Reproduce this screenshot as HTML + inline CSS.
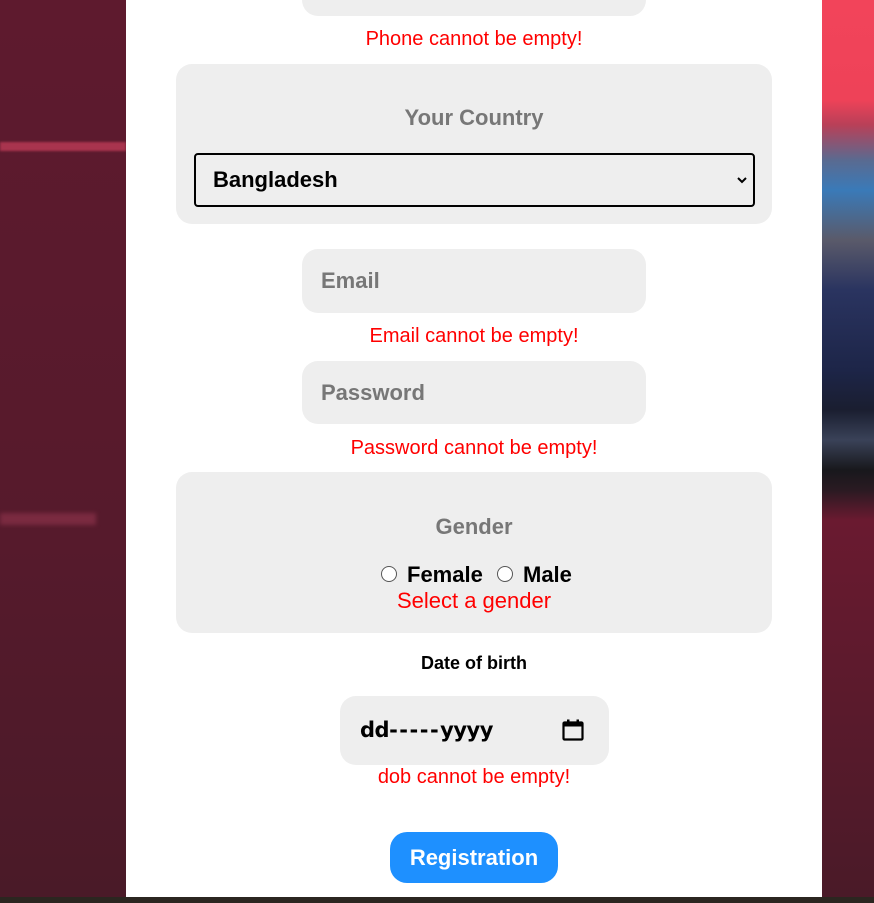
<!DOCTYPE html>
<html><head><meta charset="utf-8"><style>
*{margin:0;padding:0;box-sizing:border-box}
body{width:874px;height:903px;overflow:hidden;position:relative;font-family:"Liberation Sans",Arial,sans-serif;background:#2b2620}
.abs{position:absolute}
.left{left:0;top:0;width:126px;height:897px;background:linear-gradient(#5e1a2e,#561a2c 60%,#4a1a28)}
.right{left:822px;top:0;width:52px;height:897px;background:linear-gradient(#f2445a 0,#ee4258 100px,#b84058 125px,#5a6a90 160px,#3a7ab8 190px,#5a5a6a 240px,#2a3460 290px,#1d2548 370px,#1a1e30 410px,#3a4258 440px,#18181c 470px,#2a1a22 490px,#6a1a30 520px,#4a1a28 897px)}
.panel{left:126px;top:0;width:696px;height:897px;background:#fff}
.inp{background:#eee;border-radius:16px}
.ph{color:#777;font-weight:bold;font-size:22px}
.err{color:#f00;font-size:20px;text-align:center;width:696px;left:126px}
.box{left:176px;width:596px;background:#eee;border-radius:16px}
.c{text-align:center;width:696px;left:126px}
</style></head><body>
<div class="abs left"></div>
<div class="abs" style="left:0;top:142px;width:126px;height:9px;background:#a8344e;filter:blur(1px)"></div>
<div class="abs" style="left:0;top:513px;width:96px;height:12px;background:#7a2a40;filter:blur(2px)"></div>
<div class="abs right"></div>
<div class="abs panel"></div>
<div class="abs inp" style="left:302px;top:-48px;width:344px;height:64px"></div>
<div class="abs err" style="top:28px">Phone cannot be empty!</div>
<div class="abs box" style="top:64px;height:160px"></div>
<div class="abs c ph" style="top:105px">Your Country</div>
<div class="abs" style="left:194px;top:153px;width:561px;height:54px;border:2px solid #000;border-radius:4px;background:#eee"></div>
<div class="abs" style="left:213px;top:167px;font-size:22px;font-weight:bold;color:#000">Bangladesh</div>
<svg class="abs" style="left:736px;top:175px" width="12" height="10" viewBox="0 0 12 10"><path d="M2 3l4 4 4-4" stroke="#000" stroke-width="2" fill="none"/></svg>
<div class="abs inp" style="left:302px;top:249px;width:344px;height:64px"></div>
<div class="abs ph" style="left:321px;top:268px">Email</div>
<div class="abs err" style="top:325px">Email cannot be empty!</div>
<div class="abs inp" style="left:302px;top:361px;width:344px;height:63px"></div>
<div class="abs ph" style="left:321px;top:380px">Password</div>
<div class="abs err" style="top:437px">Password cannot be empty!</div>
<div class="abs box" style="top:472px;height:161px"></div>
<div class="abs c ph" style="top:514px">Gender</div>
<div class="abs" style="left:381px;top:566px;width:16px;height:16px;border:1px solid #555;border-radius:50%;background:#fff"></div>
<div class="abs" style="left:407px;top:562px;font-size:22px;font-weight:bold">Female</div>
<div class="abs" style="left:497px;top:566px;width:16px;height:16px;border:1px solid #555;border-radius:50%;background:#fff"></div>
<div class="abs" style="left:523px;top:562px;font-size:22px;font-weight:bold">Male</div>
<div class="abs c" style="top:588px;color:#f00;font-size:22px">Select a gender</div>
<div class="abs c" style="top:653px;font-size:18px;font-weight:bold">Date of birth</div>
<div class="abs inp" style="left:340px;top:696px;width:269px;height:69px"></div>
<div class="abs" style="left:360px;top:718px;font-size:21px;font-weight:bold;font-family:'DejaVu Sans',sans-serif;letter-spacing:-0.5px">dd<span style="letter-spacing:1.5px">-----</span>yyyy</div>
<svg class="abs" style="left:561px;top:718px" width="24" height="24" viewBox="0 0 24 24"><rect x="2.5" y="4.5" width="19" height="17" rx="1" stroke="#000" stroke-width="2.2" fill="none"/><rect x="2.5" y="4.5" width="19" height="4" fill="#000"/><rect x="6" y="1.5" width="2.5" height="4" fill="#000"/><rect x="15.5" y="1.5" width="2.5" height="4" fill="#000"/></svg>
<div class="abs err" style="top:766px">dob cannot be empty!</div>
<div class="abs" style="left:390px;top:832px;width:168px;height:51px;background:#1e90ff;border-radius:17px;color:#fff;font-weight:bold;font-size:22px;text-align:center;line-height:51px">Registration</div>
</body></html>
